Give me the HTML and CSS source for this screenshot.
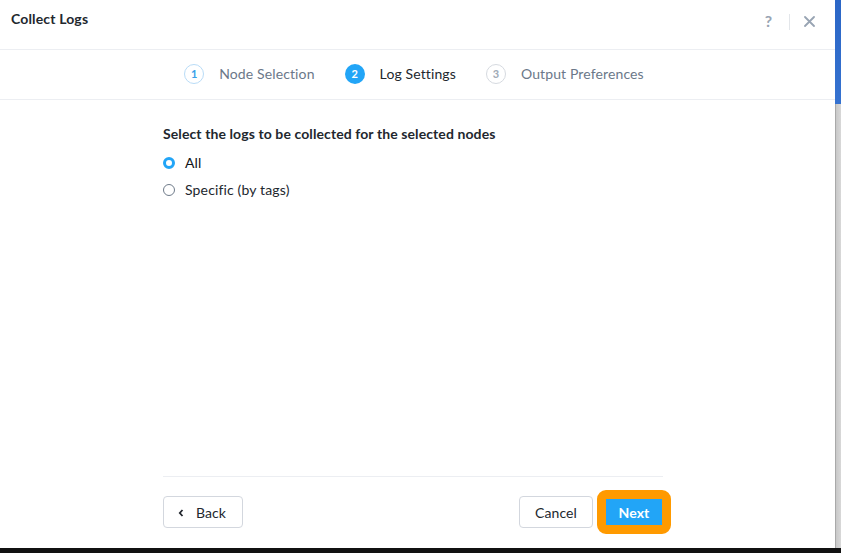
FILE: index.html
```html
<!DOCTYPE html>
<html>
<head>
<meta charset="utf-8">
<link rel="stylesheet" href="styles.css">
</head>
<body>
<div class="screen">
  <div class="modal">
    <div class="header">
      <div class="title">Collect Logs</div>
      <div class="header-actions">
        <span class="help">?</span>
        <span class="divider"></span>
        <svg class="close" width="11" height="11" viewBox="0 0 11 11"><path d="M1 1 L10 10 M10 1 L1 10" stroke="#98a4b3" stroke-width="1.8" stroke-linecap="round"/></svg>
      </div>
    </div>
    <div class="stepper">
      <div class="step done"><span class="num">1</span><span class="label">Node Selection</span></div>
      <div class="step active"><span class="num">2</span><span class="label">Log Settings</span></div>
      <div class="step todo"><span class="num">3</span><span class="label">Output Preferences</span></div>
    </div>
    <div class="body">
      <div class="question">Select the logs to be collected for the selected nodes</div>
      <label class="radio checked"><span class="dot"></span>All</label>
      <label class="radio"><span class="dot"></span>Specific (by tags)</label>
    </div>
    <div class="footer">
      <button class="btn back"><svg width="6" height="8" viewBox="0 0 6 8"><path d="M4.5 1 L1.8 4 L4.5 7" fill="none" stroke="#22272e" stroke-width="1.8"/></svg>Back</button>
      <div class="right">
        <button class="btn cancel">Cancel</button>
        <button class="btn next">Next</button>
      </div>
    </div>
  </div>
  <div class="side">
    <div class="side-blue"></div>
    <div class="side-grey"></div>
  </div>
</div>
<div class="taskbar"></div>
</body>
</html>
```
FILE: styles.css
```css
* { box-sizing: border-box; }
html, body { margin: 0; padding: 0; }
body {
  width: 841px;
  height: 553px;
  overflow: hidden;
  background: #121212;
  font-family: Lato, "Open Sans", sans-serif;
  color: #22272e;
}
.screen {
  display: flex;
  height: 548px;
}
.modal {
  width: 835px;
  height: 548px;
  background: #fff;
  display: flex;
  flex-direction: column;
}
.header {
  height: 50px;
  border-bottom: 1px solid #eceef2;
  display: flex;
  justify-content: space-between;
  align-items: flex-start;
  padding: 11px 20px 0 11px;
}
.title {
  font-size: 14px;
  font-weight: 700;
  line-height: 16px;
  letter-spacing: 0.15px;
}
.header-actions {
  display: flex;
  align-items: center;
  height: 18px;
}
.help {
  font-size: 16px;
  font-weight: 700;
  color: #98a4b3;
  line-height: 18px;
  margin-top: 1px;
}
.divider {
  width: 1px;
  height: 16px;
  background: #e3e6ea;
  margin: 3px 14px 0 17px;
}
.close { margin-top: 3px; }
.stepper {
  height: 50px;
  border-bottom: 1px solid #eceef2;
  display: flex;
  justify-content: center;
  align-items: center;
  gap: 30px;
  padding: 0 7px 2px 0;
}
.step {
  display: flex;
  align-items: center;
  font-size: 14px;
  letter-spacing: 0.12px;
}
.num {
  width: 20px;
  height: 20px;
  border-radius: 50%;
  display: inline-flex;
  align-items: center;
  justify-content: center;
  font-size: 11px;
  font-weight: 700;
  margin-right: 15px;
  letter-spacing: 0;
}
.done .num { border: 1px solid #b9dcf7; color: #3aa0e8; }
.active .num { background: #22a5f7; color: #fff; }
.todo .num { border: 1px solid #d6dae0; color: #a0a9b6; }
.label { color: #6b7889; }
.active .label { color: #22272e; }
.body {
  flex: 1;
  width: 500px;
  margin-left: 163px;
  padding-top: 26px;
  border-bottom: 1px solid #eceef2;
}
.question {
  font-size: 14px;
  font-weight: 700;
  line-height: 16px;
  letter-spacing: 0.1px;
  margin-bottom: 13px;
}
.radio {
  display: flex;
  align-items: center;
  font-size: 14px;
  letter-spacing: 0.15px;
  line-height: 16px;
  height: 16px;
  margin-bottom: 11px;
}
.radio.checked { color: #111418; }
.radio .dot {
  width: 12px;
  height: 12px;
  border-radius: 50%;
  border: 1px solid #6f7b8a;
  margin-right: 10px;
  flex: none;
}
.radio.checked .dot {
  border: 3.5px solid #22a5f7;
  background: #fff;
}
.footer {
  height: 71px;
  width: 502px;
  margin-left: 163px;
  display: flex;
  justify-content: space-between;
  align-items: flex-start;
  padding-top: 19px;
}
.right { display: flex; gap: 10px; }
.btn {
  height: 32px;
  border-radius: 4px;
  font-family: Lato, "Open Sans", sans-serif;
  font-size: 14px;
  letter-spacing: 0.1px;
  display: inline-flex;
  align-items: center;
  justify-content: center;
  padding: 1px 0 0;
  cursor: pointer;
}
.back, .cancel {
  background: #fff;
  border: 1px solid #d3d7de;
  color: #22272e;
}
.back { width: 80px; gap: 12px; padding-right: 2px; }
.cancel { width: 74px; }
.next {
  width: 62px;
  background: #22a5f7;
  border: none;
  color: #fff;
  font-weight: 700;
  outline: 9px solid #ff9a00;
  outline-offset: -3px;
  border-radius: 3px;
}
.side {
  width: 6px;
  display: flex;
  flex-direction: column;
}
.side-blue {
  height: 104px;
  background: linear-gradient(to bottom, #2b66c6, #3572d0);
}
.side-grey {
  flex: 1;
  background: linear-gradient(to right, #8a8a8a 0, #c8c8c8 1px, #d8d8d8 100%);
}
.taskbar {
  height: 5px;
  background: #111;
}
```
